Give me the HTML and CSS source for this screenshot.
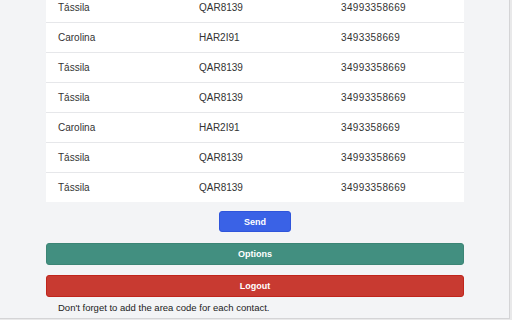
FILE: index.html
```html
<!DOCTYPE html>
<html lang="en">
<head>
    <meta charset="UTF-8">
    <meta name="viewport" content="width=device-width, initial-scale=1.0">
    <title>Contacts</title>
    <link rel="stylesheet" href="styles.css">
</head>
<body>
    <div class="popup">
        <div class="content">
            <table class="contacts">
                <colgroup>
                    <col class="col-name">
                    <col class="col-plate">
                    <col>
                </colgroup>
                <tr><td>Tássila</td><td>QAR8139</td><td class="phone">34993358669</td></tr>
                <tr><td>Carolina</td><td>HAR2I91</td><td class="phone">3493358669</td></tr>
                <tr><td>Tássila</td><td>QAR8139</td><td class="phone">34993358669</td></tr>
                <tr><td>Tássila</td><td>QAR8139</td><td class="phone">34993358669</td></tr>
                <tr><td>Carolina</td><td>HAR2I91</td><td class="phone">3493358669</td></tr>
                <tr><td>Tássila</td><td>QAR8139</td><td class="phone">34993358669</td></tr>
                <tr><td>Tássila</td><td>QAR8139</td><td class="phone">34993358669</td></tr>
            </table>

            <div class="btn-container">
                <button class="btn-send">Send</button>
            </div>
            <button class="btn-wide btn-options">Options</button>
            <button class="btn-wide btn-logout">Logout</button>

            <p class="hint">Don't forget to add the area code for each contact.</p>
        </div>
    </div>
</body>
</html>
```

FILE: styles.css
```css
body {
    font-family: "Liberation Sans", Arial, sans-serif;
    background-color: #e9e9ea;
    margin: 0;
    padding: 0;
    overflow: hidden;
}

.popup {
    width: 509px;
    height: 318px;
    background-color: #f3f4f6;
    border-right: 1px solid #d4d4d6;
    border-bottom: 1px solid #d4d4d6;
    overflow: hidden;
}

.content {
    margin-top: -7px;
    padding: 0 45px 0 46px;
}

.contacts {
    width: 100%;
    border-collapse: collapse;
    table-layout: fixed;
    background-color: #fff;
}

.col-name {
    width: 141px;
}

.col-plate {
    width: 142px;
}

.contacts td {
    height: 29px;
    padding: 0 12px;
    font-size: 10px;
    color: #333;
    border-bottom: 1px solid #e6e7ea;
}

.contacts td.phone {
    letter-spacing: 0.35px;
}

.contacts tr:last-child td {
    border-bottom: none;
}

.btn-container {
    display: flex;
    justify-content: center;
    margin-top: 9px;
}

button {
    font-family: "Liberation Sans", Arial, sans-serif;
    font-size: 9px;
    font-weight: bold;
    color: #fff;
    border-radius: 3px;
    cursor: pointer;
}

.btn-send {
    width: 72px;
    height: 21px;
    background-color: #3a62e6;
    border: 1px solid #2f55db;
}

.btn-wide {
    display: block;
    width: 100%;
    height: 22px;
    margin-top: 11px;
}

.btn-options {
    background-color: #428f80;
    border: 1px solid #3c8575;
}

.btn-logout {
    margin-top: 10px;
    background-color: #c83a31;
    border: 1px solid #c0251c;
}

.hint {
    margin: 5px 0 0 12px;
    font-size: 9.5px;
    color: #222;
}
```
